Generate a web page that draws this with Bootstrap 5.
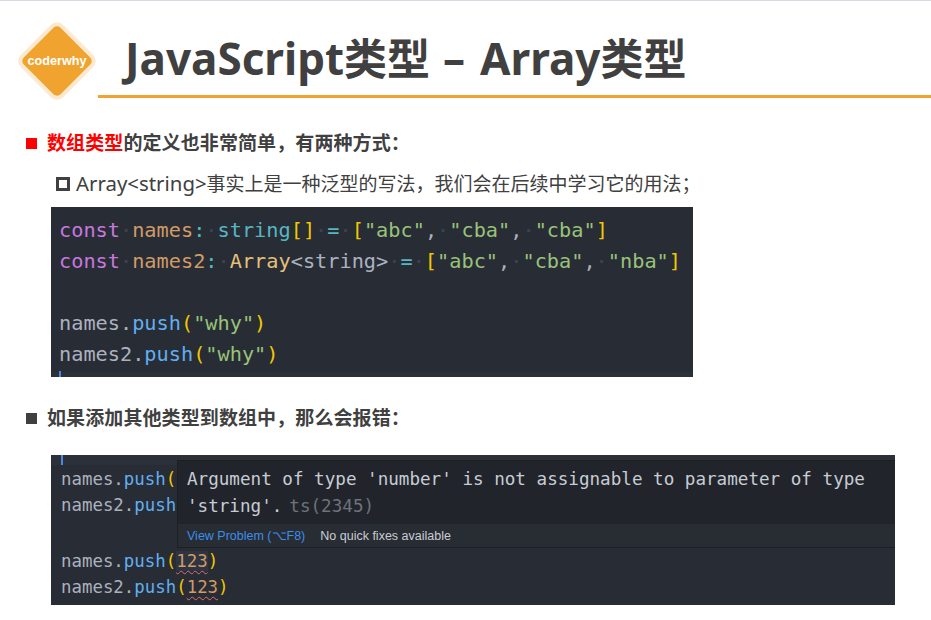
<!DOCTYPE html>
<html lang="zh">
<head>
<meta charset="utf-8">
<title>JavaScript类型 – Array类型</title>
<link href="https://cdn.jsdelivr.net/npm/bootstrap@5.3.0/dist/css/bootstrap.min.css" rel="stylesheet">
<style>
html,body{height:620px;overflow:hidden;background:#fff}
body{font-family:"Noto Sans","Noto Sans CJK SC",sans-serif;color:#404040;border-top:1px solid #d5dbe3}
.slide-head{height:98px;padding-left:18px}
.logo-mark{width:78px;height:78px;margin-top:21px;flex:none}
.logo-mark text{font-family:"Liberation Sans",sans-serif;font-weight:700;font-size:12.6px;fill:#fff}
.title-box{margin-left:2px;height:97px;border-bottom:3px solid #f0a42f;padding-left:27px}
.title-txt{font-family:"Noto Sans","Noto Sans CJK SC",sans-serif;font-size:44px;font-weight:700;line-height:1;margin:0;padding-top:35px;color:#404040}
.title-txt .cj{font-size:43px}
.title-txt .dash{padding:0 15px 0 13px}
.lv1{font-size:19px;font-weight:700;line-height:24px;margin:0;color:#404040;letter-spacing:.1px}
.lv1-a{padding:32px 0 0 26px}
.lv1-b{padding:29px 0 0 26px}
.sq{width:11px;height:11px;flex:none;margin-right:10px;display:inline-block}
.sq-red{background:#f00}
.sq-dark{background:#404040}
.hl{color:#f00}
.lv2{font-size:19px;line-height:24px;padding:16px 0 0 56px;margin:0;color:#404040}
.lv2 .lat{font-size:20.4px}
.sq-hollow{width:14px;height:14px;border:3px solid #404040;flex:none;margin-right:6px}
.code-a,.code-b{font-family:"DejaVu Sans Mono",monospace;background:#282c35;position:relative;white-space:pre;margin-left:51px}
.code-a{width:642px;height:170px;margin-top:11px;padding:8px 0 0 8px;font-size:20.25px;line-height:31px;border-bottom:5px solid #2c3039}
.code-b{width:844px;height:150px;margin-top:25px;padding:11px 0 0 10px;font-size:17.4px;line-height:26px;color:#a9afbc}
.ln-gap{height:30px}
.cur-a,.cur-b{position:absolute;left:8px;width:2px;background:#4d86e0}
.cur-a{bottom:-5px;height:6px}
.cur-b{left:10px;top:0;height:10px}
.top-strip{position:absolute;left:0;right:0;top:0;height:10px;background:#2c3039}
.k{color:#c678dd}.v{color:#d19a66}.t{color:#56b6c2}.y{color:#e5c07b}.b{color:#f0c800}.s{color:#98c379}.f{color:#61afef}.n{color:#abb2bf}.d{color:#3e4450}
.pop{position:absolute;left:126px;top:5px;right:0;height:88px;background:#21252b;border:1px solid #1c1f25;border-right:0;color:#c8ccd4;line-height:27px;font-size:17.6px}
.pop-body{height:63px;padding:5px 0 0 9px}
.pop-body .ts{color:#6d727c;margin-left:7px}
.pop-foot{height:23px;background:#282c33;padding:1px 0 0 9px;font-family:"Liberation Sans",sans-serif;font-size:12.5px;line-height:23px;color:#c8ccd4;white-space:pre}
.pop-foot a{color:#3b8eea;text-decoration:none;margin-right:15px}
.err{text-decoration:underline wavy #e06c75 1px;text-underline-offset:3px}
.err-box{background:#2e3440}
</style>
</head>
<body>
<header class="slide-head d-flex">
  <svg class="logo-mark" viewBox="0 0 78 78" aria-label="coderwhy logo">
    <rect x="11" y="11" width="56" height="56" rx="7" fill="#f0a42f" stroke="#fbe9d0" stroke-width="4" transform="rotate(45 39 39)"/>
    <text x="39" y="42.5" text-anchor="middle">coderwhy</text>
  </svg>
  <div class="title-box flex-grow-1">
    <h1 class="title-txt">JavaScript<span class="cj">类型</span><span class="dash">–</span>Array<span class="cj">类型</span></h1>
  </div>
</header>
<p class="lv1 lv1-a d-flex align-items-center"><span class="sq sq-red"></span><span><span class="hl">数组类型</span>的定义也非常简单，有两种方式：</span></p>
<p class="lv2 d-flex align-items-center"><span class="sq-hollow"></span><span><span class="lat">Array&lt;string&gt;</span>事实上是一种泛型的写法，我们会在后续中学习它的用法；</span></p>
<div class="code-a"><span class="k">const</span><span class="d">·</span><span class="v">names</span><span class="t">:</span><span class="d">·</span><span class="t">string</span><span class="b">[]</span><span class="d">·</span><span class="t">=</span><span class="d">·</span><span class="b">[</span><span class="s">"abc"</span><span class="n">,</span><span class="d">·</span><span class="s">"cba"</span><span class="n">,</span><span class="d">·</span><span class="s">"cba"</span><span class="b">]</span>
<span class="k">const</span><span class="d">·</span><span class="v">names2</span><span class="t">:</span><span class="d">·</span><span class="y">Array</span><span class="n">&lt;string&gt;</span><span class="d">·</span><span class="t">=</span><span class="d">·</span><span class="b">[</span><span class="s">"abc"</span><span class="n">,</span><span class="d">·</span><span class="s">"cba"</span><span class="n">,</span><span class="d">·</span><span class="s">"nba"</span><span class="b">]</span>

<span class="n">names.</span><span class="f">push</span><span class="b">(</span><span class="s">"why"</span><span class="b">)</span>
<span class="n">names2.</span><span class="f">push</span><span class="b">(</span><span class="s">"why"</span><span class="b">)</span><span class="cur-a"></span></div>
<p class="lv1 lv1-b d-flex align-items-center"><span class="sq sq-dark"></span><span>如果添加其他类型到数组中，那么会报错：</span></p>
<div class="code-b"><span class="top-strip"></span><span class="cur-b"></span><div><span class="n">names.</span><span class="f">push</span><span class="b">(</span></div><div><span class="n">names2.</span><span class="f">push</span></div><div class="ln-gap"></div><div><span class="n">names.</span><span class="f">push</span><span class="b">(</span><span class="v err err-box">123</span><span class="b">)</span></div><div><span class="n">names2.</span><span class="f">push</span><span class="b">(</span><span class="v err">123</span><span class="b">)</span></div><div class="pop"><div class="pop-body"><div>Argument of type 'number' is not assignable to parameter of type</div><div>'string'.<span class="ts">ts(2345)</span></div></div><div class="pop-foot"><a href="#">View Problem (⌥F8)</a>No quick fixes available</div></div></div>
</body>
</html>
